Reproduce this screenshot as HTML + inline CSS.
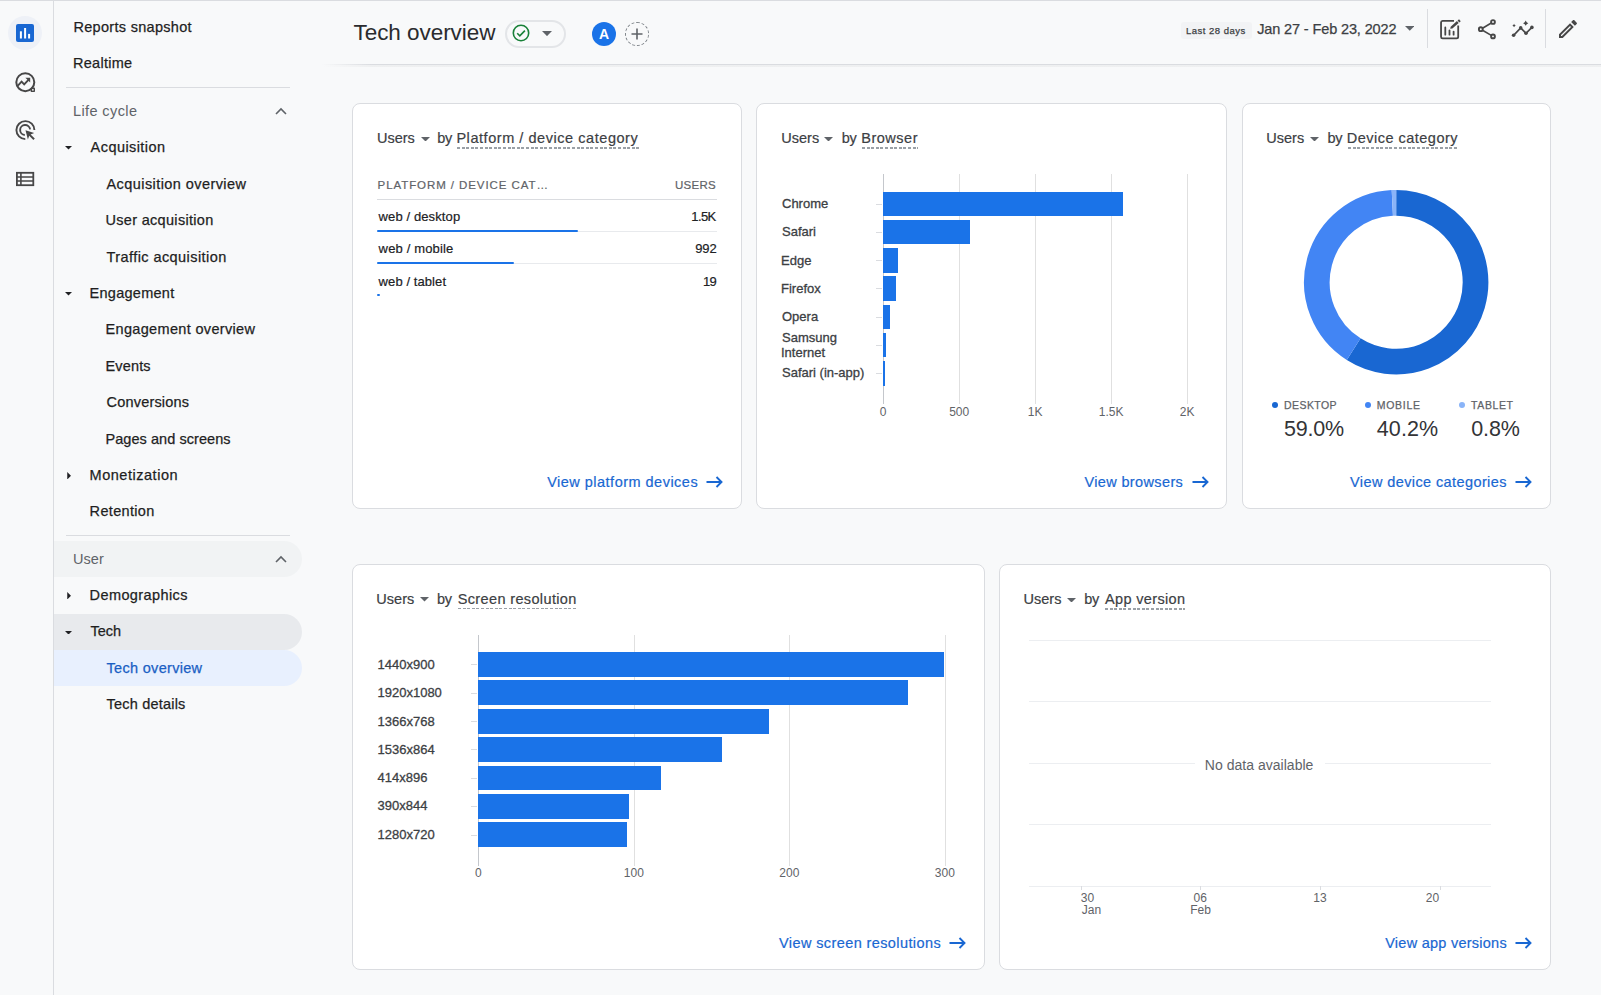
<!DOCTYPE html>
<html><head><meta charset="utf-8"><title>Tech overview</title>
<style>
html,body{margin:0;padding:0}
body{width:1601px;height:995px;overflow:hidden;background:#f8f9fa;position:relative;font-family:"Liberation Sans",sans-serif}
.t{position:absolute;white-space:nowrap;font-family:"Liberation Sans",sans-serif}
</style></head><body>
<div style="position:absolute;left:0px;top:0px;width:1601px;height:1px;background:#dadce0;"></div>
<div style="position:absolute;left:53px;top:0px;width:1px;height:995px;background:#dadce0;"></div>
<div style="position:absolute;left:8px;top:16px;width:34px;height:34px;border-radius:50%;background:#eef1f7"></div>
<svg style="position:absolute;left:16px;top:24px" width="18" height="18" viewBox="0 0 18 18"><rect x="0" y="0" width="18" height="18" rx="2" fill="#1967d2"/><rect x="3.9" y="7.3" width="2" height="7.2" fill="#fff"/><rect x="8.1" y="4" width="2" height="10.5" fill="#fff"/><rect x="12.1" y="9.9" width="2" height="4.6" fill="#fff"/></svg>
<svg style="position:absolute;left:15px;top:71.5px" width="21" height="21" viewBox="0 0 21 21"><circle cx="10.3" cy="10.2" r="9.0" fill="none" stroke="#474747" stroke-width="2.0"/><rect x="15.6" y="15.6" width="4.4" height="4.4" rx="0.8" fill="#474747"/><rect x="17.1" y="17.1" width="1.5" height="1.5" fill="#fff"/><path d="M2.9 13.6L6.6 9.6L9.2 12.3L13.9 7.4" fill="none" stroke="#474747" stroke-width="1.9"/><path d="M10.4 5.8H15.2V10.6Z" fill="#474747"/></svg>
<svg style="position:absolute;left:15px;top:120px" width="21" height="21" viewBox="0 0 21 21"><path d="M19.4 10.0A9.0 9.0 0 1 0 10.3 19.1" fill="none" stroke="#474747" stroke-width="1.9"/><path d="M15.1 9.4A5.0 5.0 0 1 0 9.8 15.0" fill="none" stroke="#474747" stroke-width="1.9"/><path d="M10.5 10.2L19.2 13.1L15.6 14.4L19.8 18.6L18.4 20.0L14.2 15.8L12.9 19.4Z" fill="#474747"/></svg>
<svg style="position:absolute;left:15px;top:171px" width="21" height="16" viewBox="0 0 21 16"><rect x="1.9" y="1.8" width="16.4" height="12.4" fill="none" stroke="#474747" stroke-width="1.8"/><path d="M1.9 6H18.3M1.9 10H18.3M5.9 1.8V14.2" stroke="#474747" stroke-width="1.6"/></svg>
<div style="position:absolute;left:66px;top:87px;width:224px;height:1px;background:#dadce0;"></div>
<div style="position:absolute;left:66px;top:535px;width:224px;height:1px;background:#dadce0;"></div>
<div style="position:absolute;left:54px;top:541px;width:248px;height:35.5px;background:#f1f3f4;border-radius:0 18px 18px 0;"></div>
<div style="position:absolute;left:54px;top:614px;width:248px;height:36px;background:#e8eaed;border-radius:0 18px 18px 0;"></div>
<div style="position:absolute;left:54px;top:650px;width:248px;height:36px;background:#e8f0fe;border-radius:0 18px 18px 0;"></div>
<svg style="position:absolute;left:275px;top:106.5px" width="12" height="8" viewBox="0 0 12 8"><path d="M1 7L6 2L11 7" fill="none" stroke="#5f6368" stroke-width="1.6"/></svg>
<svg style="position:absolute;left:275px;top:554.5px" width="12" height="8" viewBox="0 0 12 8"><path d="M1 7L6 2L11 7" fill="none" stroke="#5f6368" stroke-width="1.6"/></svg>
<svg style="position:absolute;left:65.3px;top:146.0px" width="7" height="3.6" viewBox="0 0 10 5"><path d="M0 0L5 5L10 0z" fill="#202124"/></svg>
<svg style="position:absolute;left:65.3px;top:292.2px" width="7" height="3.6" viewBox="0 0 10 5"><path d="M0 0L5 5L10 0z" fill="#202124"/></svg>
<svg style="position:absolute;left:65.3px;top:630.5px" width="7" height="3.6" viewBox="0 0 10 5"><path d="M0 0L5 5L10 0z" fill="#202124"/></svg>
<svg style="position:absolute;left:67.2px;top:471.8px" width="4.2" height="7.5" viewBox="0 0 5 10"><path d="M0 0L5 5L0 10z" fill="#202124"/></svg>
<svg style="position:absolute;left:67.2px;top:591.7px" width="4.2" height="7.5" viewBox="0 0 5 10"><path d="M0 0L5 5L0 10z" fill="#202124"/></svg>
<div style="position:absolute;left:322px;top:64px;width:1279px;height:1px;background:linear-gradient(90deg,rgba(218,220,224,0) 0,#dadce0 50px);"></div>
<div style="position:absolute;left:322px;top:65px;width:1279px;height:2px;background:linear-gradient(90deg,rgba(60,64,67,0) 0,rgba(60,64,67,0.05) 50px);"></div>
<div style="position:absolute;left:505px;top:19.5px;width:61px;height:28px;box-sizing:border-box;border:2px solid #e3e5e8;border-radius:14px"></div>
<svg style="position:absolute;left:512px;top:24px" width="18" height="18" viewBox="0 0 18 18"><circle cx="9" cy="9" r="7.7" fill="none" stroke="#188038" stroke-width="1.6"/><path d="M5.2 9.2L7.8 11.8L12.9 6.6" fill="none" stroke="#188038" stroke-width="1.6"/></svg>
<svg style="position:absolute;left:542.3px;top:31px" width="10" height="5.2" viewBox="0 0 10 5"><path d="M0 0L5 5L10 0z" fill="#5f6368"/></svg>
<div style="position:absolute;left:592px;top:21.5px;width:24px;height:24px;border-radius:50%;background:#1a73e8"></div>
<div style="position:absolute;left:592px;top:24.5px;width:24px;text-align:center;font:700 14px/18px 'Liberation Sans',sans-serif;color:#fff">A</div>
<div style="position:absolute;left:624.5px;top:21.5px;width:24px;height:24px;box-sizing:border-box;border-radius:50%;border:1px dashed #80868b"></div>
<svg style="position:absolute;left:630.5px;top:27.5px" width="12" height="12" viewBox="0 0 12 12"><path d="M6 0.5V11.5M0.5 6H11.5" stroke="#5f6368" stroke-width="1.6"/></svg>
<div style="position:absolute;left:1181px;top:21.5px;width:71px;height:17px;background:#f2f3f5;border-radius:3px;"></div>
<svg style="position:absolute;left:1404.5px;top:26px" width="9.5" height="4.8" viewBox="0 0 10 5"><path d="M0 0L5 5L10 0z" fill="#5f6368"/></svg>
<div style="position:absolute;left:1427px;top:9px;width:1px;height:38.5px;background:#dadce0;"></div>
<div style="position:absolute;left:1545px;top:9px;width:1px;height:38.5px;background:#dadce0;"></div>
<svg style="position:absolute;left:1438px;top:17px" width="24" height="24" viewBox="0 0 24 24"><path d="M16 3.8H4.6Q3.05 3.8 3.05 5.4V19.7Q3.05 21.3 4.6 21.3H18.6Q20.2 21.3 20.2 19.7V8.4" fill="none" stroke="#474747" stroke-width="1.8"/><path d="M7.3 10.4V17.7M11.5 13.3V17.7M15.6 14.6V17.7" stroke="#474747" stroke-width="1.8" stroke-linecap="round"/><path d="M12.2 11.8L12.68 9.64L18.95 4.08L20.67 6.02L14.40 11.58Z M19.55 3.55L21.04 2.22L22.76 4.16L21.27 5.49Z" fill="#474747"/></svg>
<svg style="position:absolute;left:1474.5px;top:17px" width="24" height="24" viewBox="0 0 24 24"><circle cx="18" cy="5" r="1.9" fill="none" stroke="#474747" stroke-width="1.9"/><circle cx="5.8" cy="12.2" r="1.9" fill="none" stroke="#474747" stroke-width="1.9"/><circle cx="18" cy="19.4" r="1.9" fill="none" stroke="#474747" stroke-width="1.9"/><path d="M7.5 11.2L16.3 6.0M7.5 13.2L16.3 18.4" stroke="#474747" stroke-width="1.6"/></svg>
<svg style="position:absolute;left:1510px;top:17px" width="26" height="24" viewBox="0 0 26 24"><path d="M3.6 18.3L10.7 10.9L16.0 16.3L21.9 10.4" fill="none" stroke="#474747" stroke-width="1.7"/><circle cx="3.6" cy="18.3" r="1.8" fill="#474747"/><circle cx="10.7" cy="10.9" r="1.8" fill="#474747"/><circle cx="16.0" cy="16.3" r="1.8" fill="#474747"/><circle cx="21.9" cy="10.4" r="1.8" fill="#474747"/><path d="M15.7 3.6L16.7 5.2L18.3 6.2L16.7 7.2L15.7 8.8L14.7 7.2L13.1 6.2L14.7 5.2Z" fill="#474747"/><path d="M4.05 6.8L4.7 7.9L5.8 8.55L4.7 9.2L4.05 10.3L3.4 9.2L2.3 8.55L3.4 7.9Z" fill="#474747"/></svg>
<svg style="position:absolute;left:1556px;top:17px" width="24" height="24" viewBox="0 0 24 24"><path d="M3 17.25V21h3.75L17.81 9.94l-3.75-3.75L3 17.25zM5.92 19H5v-.92l9.06-9.06.92.92L5.92 19zM20.71 5.63l-2.34-2.34c-.2-.2-.45-.29-.71-.29s-.51.1-.7.29l-1.83 1.83 3.75 3.75 1.83-1.83c.39-.39.39-1.02 0-1.41z" fill="#474747"/></svg>
<div style="position:absolute;left:352px;top:103px;width:390px;height:406px;background:#fff;box-sizing:border-box;border:1px solid #dadce0;border-radius:8px;"></div>
<div style="position:absolute;left:756px;top:103px;width:471px;height:406px;background:#fff;box-sizing:border-box;border:1px solid #dadce0;border-radius:8px;"></div>
<div style="position:absolute;left:1242px;top:103px;width:309px;height:406px;background:#fff;box-sizing:border-box;border:1px solid #dadce0;border-radius:8px;"></div>
<div style="position:absolute;left:352px;top:564px;width:633px;height:406px;background:#fff;box-sizing:border-box;border:1px solid #dadce0;border-radius:8px;"></div>
<div style="position:absolute;left:999px;top:564px;width:552px;height:406px;background:#fff;box-sizing:border-box;border:1px solid #dadce0;border-radius:8px;"></div>
<svg style="position:absolute;left:420.5px;top:136.6px" width="9" height="4.5" viewBox="0 0 10 5"><path d="M0 0L5 5L10 0z" fill="#5f6368"/></svg>
<div style="position:absolute;left:457.4px;top:147.29999999999998px;width:181.3px;height:1.4px;background:repeating-linear-gradient(90deg,#9aa0a6 0 3px,transparent 3px 4.6px);"></div>
<svg style="position:absolute;left:824.2px;top:136.6px" width="9" height="4.5" viewBox="0 0 10 5"><path d="M0 0L5 5L10 0z" fill="#5f6368"/></svg>
<div style="position:absolute;left:862.2px;top:147.29999999999998px;width:55.6px;height:1.4px;background:repeating-linear-gradient(90deg,#9aa0a6 0 3px,transparent 3px 4.6px);"></div>
<svg style="position:absolute;left:1310.1px;top:136.6px" width="9" height="4.5" viewBox="0 0 10 5"><path d="M0 0L5 5L10 0z" fill="#5f6368"/></svg>
<div style="position:absolute;left:1347.7px;top:147.29999999999998px;width:110.8px;height:1.4px;background:repeating-linear-gradient(90deg,#9aa0a6 0 3px,transparent 3px 4.6px);"></div>
<svg style="position:absolute;left:420.3px;top:597.2px" width="9" height="4.5" viewBox="0 0 10 5"><path d="M0 0L5 5L10 0z" fill="#5f6368"/></svg>
<div style="position:absolute;left:457.7px;top:607.9000000000001px;width:118.8px;height:1.4px;background:repeating-linear-gradient(90deg,#9aa0a6 0 3px,transparent 3px 4.6px);"></div>
<svg style="position:absolute;left:1067.3px;top:597.5px" width="9" height="4.5" viewBox="0 0 10 5"><path d="M0 0L5 5L10 0z" fill="#5f6368"/></svg>
<div style="position:absolute;left:1105.0px;top:608.2px;width:80.2px;height:1.4px;background:repeating-linear-gradient(90deg,#9aa0a6 0 3px,transparent 3px 4.6px);"></div>
<div style="position:absolute;left:377px;top:199px;width:340px;height:1px;background:#dadce0;"></div>
<div style="position:absolute;left:377px;top:230.5px;width:340px;height:1px;background:#e8eaed;"></div>
<div style="position:absolute;left:377px;top:262.5px;width:340px;height:1px;background:#e8eaed;"></div>
<div style="position:absolute;left:377px;top:229.5px;width:201px;height:2.2px;background:#1a73e8;border-radius:1px;"></div>
<div style="position:absolute;left:377px;top:261.8px;width:137px;height:2.2px;background:#1a73e8;border-radius:1px;"></div>
<div style="position:absolute;left:377px;top:294.2px;width:3px;height:2.2px;background:#1a73e8;border-radius:1px;"></div>
<div style="position:absolute;left:958.8px;top:174px;width:1px;height:230px;background:#e0e0e0;"></div>
<div style="position:absolute;left:1034.7px;top:174px;width:1px;height:230px;background:#e0e0e0;"></div>
<div style="position:absolute;left:1110.7px;top:174px;width:1px;height:230px;background:#e0e0e0;"></div>
<div style="position:absolute;left:1186.6px;top:174px;width:1px;height:230px;background:#e0e0e0;"></div>
<div style="position:absolute;left:882.8px;top:174px;width:1px;height:230px;background:#c4c7cc;"></div>
<div style="position:absolute;left:883.3px;top:191.5px;width:239.29999999999995px;height:24.6px;background:#1a73e8;"></div>
<div style="position:absolute;left:876px;top:203.6px;width:6px;height:1px;background:#dadce0;"></div>
<div style="position:absolute;left:883.3px;top:219.8px;width:86.70000000000005px;height:24.6px;background:#1a73e8;"></div>
<div style="position:absolute;left:876px;top:231.9px;width:6px;height:1px;background:#dadce0;"></div>
<div style="position:absolute;left:883.3px;top:248.0px;width:14.300000000000068px;height:24.6px;background:#1a73e8;"></div>
<div style="position:absolute;left:876px;top:260.1px;width:6px;height:1px;background:#dadce0;"></div>
<div style="position:absolute;left:883.3px;top:276.3px;width:12.700000000000045px;height:24.6px;background:#1a73e8;"></div>
<div style="position:absolute;left:876px;top:288.40000000000003px;width:6px;height:1px;background:#dadce0;"></div>
<div style="position:absolute;left:883.3px;top:304.5px;width:7.0px;height:24.6px;background:#1a73e8;"></div>
<div style="position:absolute;left:876px;top:316.6px;width:6px;height:1px;background:#dadce0;"></div>
<div style="position:absolute;left:883.3px;top:332.8px;width:2.400000000000091px;height:24.6px;background:#1a73e8;"></div>
<div style="position:absolute;left:876px;top:344.90000000000003px;width:6px;height:1px;background:#dadce0;"></div>
<div style="position:absolute;left:883.3px;top:361.0px;width:1.8000000000000682px;height:24.6px;background:#1a73e8;"></div>
<div style="position:absolute;left:876px;top:373.1px;width:6px;height:1px;background:#dadce0;"></div>
<svg style="position:absolute;left:0;top:0" width="1601" height="995"><path d="M1396.20 202.85A79.35 79.35 0 1 1 1353.68 349.20" fill="none" stroke="#1967d2" stroke-width="25.7"/><path d="M1353.68 349.20A79.35 79.35 0 0 1 1392.32 202.94" fill="none" stroke="#4285f4" stroke-width="25.7"/><path d="M1392.32 202.94A79.35 79.35 0 0 1 1396.20 202.85" fill="none" stroke="#8ab4f8" stroke-width="25.7"/></svg>
<div style="position:absolute;left:1272.2px;top:402.4px;width:6px;height:6px;border-radius:50%;background:#1967d2"></div>
<div style="position:absolute;left:1365.1px;top:402.4px;width:6px;height:6px;border-radius:50%;background:#4285f4"></div>
<div style="position:absolute;left:1459.0px;top:402.4px;width:6px;height:6px;border-radius:50%;background:#8ab4f8"></div>
<div style="position:absolute;left:633.5px;top:634.5px;width:1px;height:231px;background:#e0e0e0;"></div>
<div style="position:absolute;left:789.0px;top:634.5px;width:1px;height:231px;background:#e0e0e0;"></div>
<div style="position:absolute;left:944.5px;top:634.5px;width:1px;height:231px;background:#e0e0e0;"></div>
<div style="position:absolute;left:477.9px;top:634.5px;width:1px;height:231px;background:#c4c7cc;"></div>
<div style="position:absolute;left:478.4px;top:652.1px;width:465.80000000000007px;height:24.8px;background:#1a73e8;"></div>
<div style="position:absolute;left:471px;top:664.3000000000001px;width:6px;height:1px;background:#dadce0;"></div>
<div style="position:absolute;left:478.4px;top:680.4px;width:430.0px;height:24.8px;background:#1a73e8;"></div>
<div style="position:absolute;left:471px;top:692.6px;width:6px;height:1px;background:#dadce0;"></div>
<div style="position:absolute;left:478.4px;top:708.8px;width:290.20000000000005px;height:24.8px;background:#1a73e8;"></div>
<div style="position:absolute;left:471px;top:721.0px;width:6px;height:1px;background:#dadce0;"></div>
<div style="position:absolute;left:478.4px;top:737.2px;width:243.80000000000007px;height:24.8px;background:#1a73e8;"></div>
<div style="position:absolute;left:471px;top:749.4000000000001px;width:6px;height:1px;background:#dadce0;"></div>
<div style="position:absolute;left:478.4px;top:765.6px;width:183.10000000000002px;height:24.8px;background:#1a73e8;"></div>
<div style="position:absolute;left:471px;top:777.8000000000001px;width:6px;height:1px;background:#dadce0;"></div>
<div style="position:absolute;left:478.4px;top:794.0px;width:150.30000000000007px;height:24.8px;background:#1a73e8;"></div>
<div style="position:absolute;left:471px;top:806.2px;width:6px;height:1px;background:#dadce0;"></div>
<div style="position:absolute;left:478.4px;top:822.3px;width:148.60000000000002px;height:24.8px;background:#1a73e8;"></div>
<div style="position:absolute;left:471px;top:834.5px;width:6px;height:1px;background:#dadce0;"></div>
<div style="position:absolute;left:1029.4px;top:639.8px;width:461.6px;height:1px;background:#eceef1;"></div>
<div style="position:absolute;left:1029.4px;top:701.4px;width:461.6px;height:1px;background:#eceef1;"></div>
<div style="position:absolute;left:1029.4px;top:762.8px;width:461.6px;height:1px;background:#eceef1;"></div>
<div style="position:absolute;left:1029.4px;top:823.8px;width:461.6px;height:1px;background:#eceef1;"></div>
<div style="position:absolute;left:1029.4px;top:885.6px;width:461.6px;height:1px;background:#eceef1;"></div>
<div style="position:absolute;left:1195px;top:755px;width:130px;height:20px;background:#fff;"></div>
<div style="position:absolute;left:1080.5px;top:886px;width:1px;height:4px;background:#dadce0;"></div>
<div style="position:absolute;left:1200.0px;top:886px;width:1px;height:4px;background:#dadce0;"></div>
<div style="position:absolute;left:1319.9px;top:886px;width:1px;height:4px;background:#dadce0;"></div>
<div style="position:absolute;left:1439.5px;top:886px;width:1px;height:4px;background:#dadce0;"></div>
<svg style="position:absolute;left:706.3px;top:476.0px" width="17" height="12" viewBox="0 0 17 12"><path d="M0.5 6H15.5M10.5 1L15.5 6L10.5 11" fill="none" stroke="#1967d2" stroke-width="1.9"/></svg>
<svg style="position:absolute;left:1191.5px;top:476.0px" width="17" height="12" viewBox="0 0 17 12"><path d="M0.5 6H15.5M10.5 1L15.5 6L10.5 11" fill="none" stroke="#1967d2" stroke-width="1.9"/></svg>
<svg style="position:absolute;left:1515.0px;top:476.0px" width="17" height="12" viewBox="0 0 17 12"><path d="M0.5 6H15.5M10.5 1L15.5 6L10.5 11" fill="none" stroke="#1967d2" stroke-width="1.9"/></svg>
<svg style="position:absolute;left:949.0px;top:937.3px" width="17" height="12" viewBox="0 0 17 12"><path d="M0.5 6H15.5M10.5 1L15.5 6L10.5 11" fill="none" stroke="#1967d2" stroke-width="1.9"/></svg>
<svg style="position:absolute;left:1515.4px;top:937.3px" width="17" height="12" viewBox="0 0 17 12"><path d="M0.5 6H15.5M10.5 1L15.5 6L10.5 11" fill="none" stroke="#1967d2" stroke-width="1.9"/></svg>
<div class="t" style="left:73.40px;top:20.00px;font-size:14.5px;line-height:14.5px;letter-spacing:0.305px;color:#1f1f1f;-webkit-text-stroke:0.25px currentColor;">Reports snapshot</div>
<div class="t" style="left:73.00px;top:56.00px;font-size:14.5px;line-height:14.5px;letter-spacing:0.264px;color:#1f1f1f;-webkit-text-stroke:0.25px currentColor;">Realtime</div>
<div class="t" style="left:73.00px;top:104.00px;font-size:14.5px;line-height:14.5px;letter-spacing:0.391px;color:#5f6368;">Life cycle</div>
<div class="t" style="left:90.60px;top:140.00px;font-size:14.5px;line-height:14.5px;letter-spacing:0.434px;color:#1f1f1f;-webkit-text-stroke:0.25px currentColor;">Acquisition</div>
<div class="t" style="left:106.50px;top:177.00px;font-size:14.5px;line-height:14.5px;letter-spacing:0.427px;color:#1f1f1f;-webkit-text-stroke:0.25px currentColor;">Acquisition overview</div>
<div class="t" style="left:105.50px;top:213.00px;font-size:14.5px;line-height:14.5px;letter-spacing:0.307px;color:#1f1f1f;-webkit-text-stroke:0.25px currentColor;">User acquisition</div>
<div class="t" style="left:106.50px;top:250.00px;font-size:14.5px;line-height:14.5px;letter-spacing:0.430px;color:#1f1f1f;-webkit-text-stroke:0.25px currentColor;">Traffic acquisition</div>
<div class="t" style="left:89.60px;top:286.00px;font-size:14.5px;line-height:14.5px;letter-spacing:0.267px;color:#1f1f1f;-webkit-text-stroke:0.25px currentColor;">Engagement</div>
<div class="t" style="left:105.50px;top:322.00px;font-size:14.5px;line-height:14.5px;letter-spacing:0.333px;color:#1f1f1f;-webkit-text-stroke:0.25px currentColor;">Engagement overview</div>
<div class="t" style="left:105.50px;top:359.00px;font-size:14.5px;line-height:14.5px;letter-spacing:0.144px;color:#1f1f1f;-webkit-text-stroke:0.25px currentColor;">Events</div>
<div class="t" style="left:106.50px;top:395.00px;font-size:14.5px;line-height:14.5px;letter-spacing:0.196px;color:#1f1f1f;-webkit-text-stroke:0.25px currentColor;">Conversions</div>
<div class="t" style="left:105.50px;top:432.00px;font-size:14.5px;line-height:14.5px;letter-spacing:0.057px;color:#1f1f1f;-webkit-text-stroke:0.25px currentColor;">Pages and screens</div>
<div class="t" style="left:89.60px;top:468.00px;font-size:14.5px;line-height:14.5px;letter-spacing:0.523px;color:#1f1f1f;-webkit-text-stroke:0.25px currentColor;">Monetization</div>
<div class="t" style="left:89.60px;top:504.00px;font-size:14.5px;line-height:14.5px;letter-spacing:0.324px;color:#1f1f1f;-webkit-text-stroke:0.25px currentColor;">Retention</div>
<div class="t" style="left:73.00px;top:552.00px;font-size:14.5px;line-height:14.5px;letter-spacing:0.071px;color:#5f6368;">User</div>
<div class="t" style="left:89.60px;top:588.00px;font-size:14.5px;line-height:14.5px;letter-spacing:0.397px;color:#1f1f1f;-webkit-text-stroke:0.25px currentColor;">Demographics</div>
<div class="t" style="left:90.60px;top:624.00px;font-size:14.5px;line-height:14.5px;letter-spacing:-0.021px;color:#1f1f1f;-webkit-text-stroke:0.25px currentColor;">Tech</div>
<div class="t" style="left:106.50px;top:661.00px;font-size:14.5px;line-height:14.5px;letter-spacing:0.308px;color:#1a5fc4;-webkit-text-stroke:0.25px currentColor;">Tech overview</div>
<div class="t" style="left:106.50px;top:697.00px;font-size:14.5px;line-height:14.5px;letter-spacing:0.207px;color:#1f1f1f;-webkit-text-stroke:0.25px currentColor;">Tech details</div>
<div class="t" style="left:353.50px;top:22.00px;font-size:22.5px;line-height:22.5px;letter-spacing:-0.051px;color:#2a2b2e;">Tech overview</div>
<div class="t" style="left:1185.90px;top:26.00px;font-size:9.5px;line-height:9.5px;letter-spacing:0.498px;color:#3c4043;-webkit-text-stroke:0.25px currentColor;">Last 28 days</div>
<div class="t" style="left:1257.20px;top:22.00px;font-size:14.5px;line-height:14.5px;letter-spacing:-0.126px;color:#3c4043;-webkit-text-stroke:0.25px currentColor;">Jan 27 - Feb 23, 2022</div>
<div class="t" style="left:376.90px;top:131.00px;font-size:14.5px;line-height:14.5px;letter-spacing:0.021px;color:#3c4043;-webkit-text-stroke:0.2px currentColor;">Users</div>
<div class="t" style="left:437.30px;top:131.00px;font-size:14.5px;line-height:14.5px;letter-spacing:-0.364px;color:#3c4043;-webkit-text-stroke:0.2px currentColor;">by</div>
<div class="t" style="left:456.40px;top:131.00px;font-size:14.5px;line-height:14.5px;letter-spacing:0.549px;color:#3c4043;-webkit-text-stroke:0.2px currentColor;">Platform / device category</div>
<div class="t" style="left:781.20px;top:131.00px;font-size:14.5px;line-height:14.5px;letter-spacing:0.021px;color:#3c4043;-webkit-text-stroke:0.2px currentColor;">Users</div>
<div class="t" style="left:841.80px;top:131.00px;font-size:14.5px;line-height:14.5px;letter-spacing:-0.364px;color:#3c4043;-webkit-text-stroke:0.2px currentColor;">by</div>
<div class="t" style="left:861.20px;top:131.00px;font-size:14.5px;line-height:14.5px;letter-spacing:0.525px;color:#3c4043;-webkit-text-stroke:0.2px currentColor;">Browser</div>
<div class="t" style="left:1266.20px;top:131.00px;font-size:14.5px;line-height:14.5px;letter-spacing:0.021px;color:#3c4043;-webkit-text-stroke:0.2px currentColor;">Users</div>
<div class="t" style="left:1327.60px;top:131.00px;font-size:14.5px;line-height:14.5px;letter-spacing:-0.364px;color:#3c4043;-webkit-text-stroke:0.2px currentColor;">by</div>
<div class="t" style="left:1346.70px;top:131.00px;font-size:14.5px;line-height:14.5px;letter-spacing:0.492px;color:#3c4043;-webkit-text-stroke:0.2px currentColor;">Device category</div>
<div class="t" style="left:376.30px;top:592.00px;font-size:14.5px;line-height:14.5px;letter-spacing:0.021px;color:#3c4043;-webkit-text-stroke:0.2px currentColor;">Users</div>
<div class="t" style="left:437.00px;top:592.00px;font-size:14.5px;line-height:14.5px;letter-spacing:-0.364px;color:#3c4043;-webkit-text-stroke:0.2px currentColor;">by</div>
<div class="t" style="left:457.70px;top:592.00px;font-size:14.5px;line-height:14.5px;letter-spacing:0.364px;color:#3c4043;-webkit-text-stroke:0.2px currentColor;">Screen resolution</div>
<div class="t" style="left:1023.50px;top:592.00px;font-size:14.5px;line-height:14.5px;letter-spacing:0.021px;color:#3c4043;-webkit-text-stroke:0.2px currentColor;">Users</div>
<div class="t" style="left:1084.20px;top:592.00px;font-size:14.5px;line-height:14.5px;letter-spacing:-0.364px;color:#3c4043;-webkit-text-stroke:0.2px currentColor;">by</div>
<div class="t" style="left:1105.00px;top:592.00px;font-size:14.5px;line-height:14.5px;letter-spacing:0.349px;color:#3c4043;-webkit-text-stroke:0.2px currentColor;">App version</div>
<div class="t" style="left:377.60px;top:180.00px;font-size:11.5px;line-height:11.5px;letter-spacing:0.919px;color:#5f6368;-webkit-text-stroke:0.2px currentColor;">PLATFORM / DEVICE CAT…</div>
<div class="t" style="left:675.00px;top:180.00px;font-size:11.5px;line-height:11.5px;letter-spacing:0.287px;color:#5f6368;-webkit-text-stroke:0.2px currentColor;">USERS</div>
<div class="t" style="left:378.60px;top:210.00px;font-size:13px;line-height:13px;letter-spacing:0.110px;color:#202124;-webkit-text-stroke:0.2px currentColor;">web / desktop</div>
<div class="t" style="left:378.60px;top:242.00px;font-size:13px;line-height:13px;letter-spacing:0.150px;color:#202124;-webkit-text-stroke:0.2px currentColor;">web / mobile</div>
<div class="t" style="left:378.60px;top:275.00px;font-size:13px;line-height:13px;letter-spacing:0.084px;color:#202124;-webkit-text-stroke:0.2px currentColor;">web / tablet</div>
<div class="t" style="left:691.30px;top:210.00px;font-size:13px;line-height:13px;letter-spacing:-0.624px;color:#202124;-webkit-text-stroke:0.2px currentColor;">1.5K</div>
<div class="t" style="left:695.20px;top:242.00px;font-size:13px;line-height:13px;letter-spacing:-0.080px;color:#202124;-webkit-text-stroke:0.2px currentColor;">992</div>
<div class="t" style="left:703.00px;top:275.00px;font-size:13px;line-height:13px;letter-spacing:-0.730px;color:#202124;-webkit-text-stroke:0.2px currentColor;">19</div>
<div class="t" style="left:547.20px;top:475.00px;font-size:14.5px;line-height:14.5px;letter-spacing:0.484px;color:#1967d2;-webkit-text-stroke:0.2px currentColor;">View platform devices</div>
<div class="t" style="left:1084.40px;top:475.00px;font-size:14.5px;line-height:14.5px;letter-spacing:0.369px;color:#1967d2;-webkit-text-stroke:0.2px currentColor;">View browsers</div>
<div class="t" style="left:1350.00px;top:475.00px;font-size:14.5px;line-height:14.5px;letter-spacing:0.401px;color:#1967d2;-webkit-text-stroke:0.2px currentColor;">View device categories</div>
<div class="t" style="left:779.00px;top:936.00px;font-size:14.5px;line-height:14.5px;letter-spacing:0.399px;color:#1967d2;-webkit-text-stroke:0.2px currentColor;">View screen resolutions</div>
<div class="t" style="left:1385.20px;top:936.00px;font-size:14.5px;line-height:14.5px;letter-spacing:0.253px;color:#1967d2;-webkit-text-stroke:0.2px currentColor;">View app versions</div>
<div class="t" style="left:782.00px;top:197.00px;font-size:13px;line-height:13px;letter-spacing:0.000px;color:#3c4043;-webkit-text-stroke:0.3px currentColor;">Chrome</div>
<div class="t" style="left:782.00px;top:225.00px;font-size:13px;line-height:13px;letter-spacing:0.000px;color:#3c4043;-webkit-text-stroke:0.3px currentColor;">Safari</div>
<div class="t" style="left:781.00px;top:254.00px;font-size:13px;line-height:13px;letter-spacing:0.000px;color:#3c4043;-webkit-text-stroke:0.3px currentColor;">Edge</div>
<div class="t" style="left:781.00px;top:282.00px;font-size:13px;line-height:13px;letter-spacing:0.000px;color:#3c4043;-webkit-text-stroke:0.3px currentColor;">Firefox</div>
<div class="t" style="left:782.00px;top:310.00px;font-size:13px;line-height:13px;letter-spacing:0.000px;color:#3c4043;-webkit-text-stroke:0.3px currentColor;">Opera</div>
<div class="t" style="left:782.00px;top:331.00px;font-size:13px;line-height:13px;letter-spacing:0.000px;color:#3c4043;-webkit-text-stroke:0.3px currentColor;">Samsung</div>
<div class="t" style="left:781.00px;top:346.00px;font-size:13px;line-height:13px;letter-spacing:0.000px;color:#3c4043;-webkit-text-stroke:0.3px currentColor;">Internet</div>
<div class="t" style="left:782.00px;top:366.00px;font-size:13px;line-height:13px;letter-spacing:0.000px;color:#3c4043;-webkit-text-stroke:0.3px currentColor;">Safari (in-app)</div>
<div class="t" style="left:879.80px;top:406.00px;font-size:12px;line-height:12px;letter-spacing:0.000px;color:#5f6368;">0</div>
<div class="t" style="left:949.13px;top:406.00px;font-size:12px;line-height:12px;letter-spacing:0.000px;color:#5f6368;">500</div>
<div class="t" style="left:1027.86px;top:406.00px;font-size:12px;line-height:12px;letter-spacing:0.000px;color:#5f6368;">1K</div>
<div class="t" style="left:1098.86px;top:406.00px;font-size:12px;line-height:12px;letter-spacing:0.000px;color:#5f6368;">1.5K</div>
<div class="t" style="left:1179.76px;top:406.00px;font-size:12px;line-height:12px;letter-spacing:0.000px;color:#5f6368;">2K</div>
<div class="t" style="left:1284.00px;top:400.00px;font-size:10.5px;line-height:10.5px;letter-spacing:0.436px;color:#5f6368;-webkit-text-stroke:0.25px currentColor;">DESKTOP</div>
<div class="t" style="left:1376.80px;top:400.00px;font-size:10.5px;line-height:10.5px;letter-spacing:0.705px;color:#5f6368;-webkit-text-stroke:0.25px currentColor;">MOBILE</div>
<div class="t" style="left:1471.00px;top:400.00px;font-size:10.5px;line-height:10.5px;letter-spacing:0.623px;color:#5f6368;-webkit-text-stroke:0.25px currentColor;">TABLET</div>
<div class="t" style="left:1284.10px;top:419.00px;font-size:21.5px;line-height:21.5px;letter-spacing:-0.236px;color:#333437;">59.0%</div>
<div class="t" style="left:1376.80px;top:419.00px;font-size:21.5px;line-height:21.5px;letter-spacing:0.089px;color:#333437;">40.2%</div>
<div class="t" style="left:1471.30px;top:419.00px;font-size:21.5px;line-height:21.5px;letter-spacing:-0.163px;color:#333437;">0.8%</div>
<div class="t" style="left:377.50px;top:658.00px;font-size:13px;line-height:13px;letter-spacing:0.000px;color:#3c4043;-webkit-text-stroke:0.3px currentColor;">1440x900</div>
<div class="t" style="left:377.50px;top:686.00px;font-size:13px;line-height:13px;letter-spacing:0.000px;color:#3c4043;-webkit-text-stroke:0.3px currentColor;">1920x1080</div>
<div class="t" style="left:377.50px;top:715.00px;font-size:13px;line-height:13px;letter-spacing:0.000px;color:#3c4043;-webkit-text-stroke:0.3px currentColor;">1366x768</div>
<div class="t" style="left:377.50px;top:743.00px;font-size:13px;line-height:13px;letter-spacing:0.000px;color:#3c4043;-webkit-text-stroke:0.3px currentColor;">1536x864</div>
<div class="t" style="left:377.50px;top:771.00px;font-size:13px;line-height:13px;letter-spacing:0.000px;color:#3c4043;-webkit-text-stroke:0.3px currentColor;">414x896</div>
<div class="t" style="left:377.50px;top:799.00px;font-size:13px;line-height:13px;letter-spacing:0.000px;color:#3c4043;-webkit-text-stroke:0.3px currentColor;">390x844</div>
<div class="t" style="left:377.50px;top:828.00px;font-size:13px;line-height:13px;letter-spacing:0.000px;color:#3c4043;-webkit-text-stroke:0.3px currentColor;">1280x720</div>
<div class="t" style="left:474.90px;top:867.00px;font-size:12px;line-height:12px;letter-spacing:0.000px;color:#5f6368;">0</div>
<div class="t" style="left:623.83px;top:867.00px;font-size:12px;line-height:12px;letter-spacing:0.000px;color:#5f6368;">100</div>
<div class="t" style="left:779.33px;top:867.00px;font-size:12px;line-height:12px;letter-spacing:0.000px;color:#5f6368;">200</div>
<div class="t" style="left:934.83px;top:867.00px;font-size:12px;line-height:12px;letter-spacing:0.000px;color:#5f6368;">300</div>
<div class="t" style="left:1204.80px;top:758.00px;font-size:14px;line-height:14px;letter-spacing:0.025px;color:#5f6368;">No data available</div>
<div class="t" style="left:1080.76px;top:892.00px;font-size:12px;line-height:12px;letter-spacing:0.000px;color:#5f6368;">30</div>
<div class="t" style="left:1081.76px;top:904.00px;font-size:12px;line-height:12px;letter-spacing:0.000px;color:#5f6368;">Jan</div>
<div class="t" style="left:1193.56px;top:892.00px;font-size:12px;line-height:12px;letter-spacing:0.000px;color:#5f6368;">06</div>
<div class="t" style="left:1190.20px;top:904.00px;font-size:12px;line-height:12px;letter-spacing:0.000px;color:#5f6368;">Feb</div>
<div class="t" style="left:1313.36px;top:892.00px;font-size:12px;line-height:12px;letter-spacing:0.000px;color:#5f6368;">13</div>
<div class="t" style="left:1425.86px;top:892.00px;font-size:12px;line-height:12px;letter-spacing:0.000px;color:#5f6368;">20</div>
</body></html>
